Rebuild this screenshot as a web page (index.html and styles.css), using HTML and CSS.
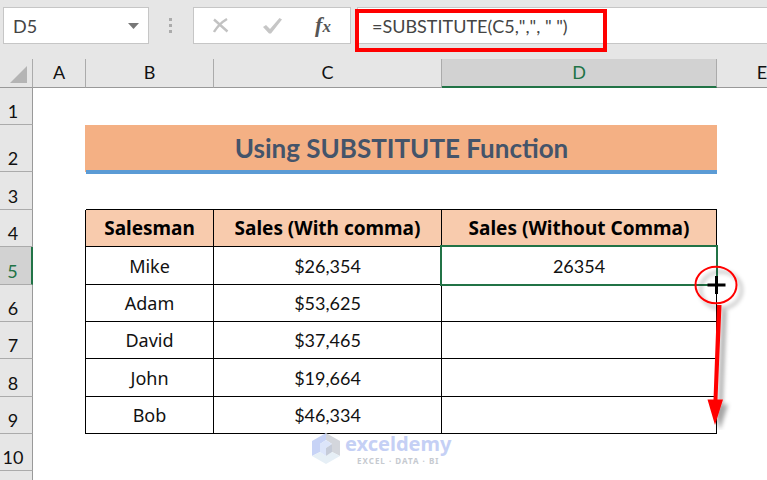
FILE: index.html
```html
<!DOCTYPE html>
<html lang="en">
<head>
<meta charset="utf-8">
<title>Using SUBSTITUTE Function</title>
<link rel="stylesheet" href="styles.css">
</head>
<body>
<header class="formula-bar">
  <div class="name-box">
    <input type="text" value="D5" aria-label="Name box">
    <button type="button" aria-label="Open name list"><svg width="12" height="6" viewBox="0 0 12 6"><path d="M0 0h11L5.500 6z" fill="#777"/></svg></button>
  </div>
  <svg class="grip" width="4" height="16" viewBox="0 0 4 16" fill="#ababab"><path d="M0 0h3v3H0zM0 6h3v3H0zM0 12h3v3H0z"/></svg>
  <div class="actions">
    <button type="button" aria-label="Cancel"><svg width="16" height="15" viewBox="0 0 16 15" fill="none" stroke="#c2c2c2" stroke-width="2.400"><path d="M1 1.500L14.500 13.500M14 1C9 4 4 9 1 14"/></svg></button>
    <button type="button" aria-label="Enter"><svg width="19" height="16" viewBox="0 0 19 16"><path d="M0 9l3-2 4 4L16.500 0 19 1.500 8 15.500H6z" fill="#c6c6c6"/></svg></button>
    <button type="button" class="fx" aria-label="Insert function">f<span>x</span></button>
  </div>
  <div class="formula">
    <input type="text" value='=SUBSTITUTE(C5,",", " ")' aria-label="Formula">
    <span class="formula-mark"></span>
  </div>
</header>
<main class="sheet">
  <table>
    <colgroup><col class="w-gutter"><col class="w-a"><col class="w-b"><col class="w-c"><col class="w-d"><col class="w-e"></colgroup>
    <thead>
      <tr class="letters"><th class="corner"><svg width="17" height="17" viewBox="0 0 17 17"><path d="M17 0v17H0z" fill="#b4b4b4"/></svg></th><th>A</th><th>B</th><th>C</th><th class="active">D</th><th>E</th></tr>
    </thead>
    <tbody>
      <tr><th>1</th><td></td><td></td><td></td><td></td><td></td></tr>
      <tr class="tall"><th>2</th><td></td><td class="title" colspan="3">Using SUBSTITUTE Function</td><td></td></tr>
      <tr class="above plus"><th>3</th><td></td><td></td><td></td><td></td><td></td></tr>
      <tr class="data head"><th>4</th><td></td><td>Salesman</td><td>Sales (With comma)</td><td>Sales (Without Comma)</td><td></td></tr>
      <tr class="data plus"><th class="active">5</th><td></td><td>Mike</td><td>$26,354</td>
        <td class="selected">26354
          <span class="selection"></span>
          <svg class="drag" width="60" height="170" viewBox="0 0 60 170">
            <defs><filter id="soft" x="-50%" y="-20%" width="200%" height="140%"><feDropShadow dx="5" dy="5" stdDeviation="2" flood-color="#000" flood-opacity=".35"/></filter></defs>
            <path d="M17 25h16M25 17v16" stroke="#fff" stroke-width="7"/>
            <g filter="url(#soft)">
              <ellipse cx="25" cy="25" rx="20.500" ry="18.300" fill="none" stroke="#f00" stroke-width="2"/>
              <path d="M26 45h4.500L26.500 139.500H32L24 165 16.500 139.500H22.500z" fill="#f00"/>
            </g>
            <path d="M16.500 25h18M25.500 16v18" stroke="#000" stroke-width="3"/>
          </svg>
        </td><td></td></tr>
      <tr class="data"><th>6</th><td></td><td>Adam</td><td>$53,625</td><td></td><td></td></tr>
      <tr class="data"><th>7</th><td></td><td>David</td><td>$37,465</td><td></td><td></td></tr>
      <tr class="data plus"><th>8</th><td></td><td>John</td><td>$19,664</td><td></td><td></td></tr>
      <tr class="data"><th>9</th><td></td><td>Bob</td><td>$46,334</td><td></td><td></td></tr>
      <tr><th>10</th><td></td><td></td><td></td><td></td><td></td></tr>
      <tr class="last"><th></th><td></td><td></td><td></td><td></td><td></td></tr>
    </tbody>
  </table>
  <div class="watermark">
    <svg width="28" height="31" viewBox="0 0 28 31">
      <path d="M14 0L0 8v15l8-4v-8l6-4z" fill="#c7d3f6"/>
      <path d="M14 0l14 8v15l-8-4v-8l-6-4z" fill="#d3d6dc"/>
      <path d="M0 23l8-4 6 4 6-4 8 4-14 8z" fill="#e6eff6"/>
      <path d="M14 7l6 4-6 4v8l-6-4v-8z" fill="#dce5fa"/>
      <path d="M14 15l6-4v8l-6 4z" fill="#c5cbd8"/>
    </svg>
    <div><strong>exceldemy</strong><small>EXCEL · DATA · BI</small></div>
  </div>
</main>
</body>
</html>
```
FILE: styles.css
```css
* { box-sizing: border-box; }

body {
  margin: 0;
  height: 100vh;
  overflow: hidden;
  background: #fff;
  color: #111;
  font-family: Lato, "Liberation Sans", sans-serif;
  font-size: 18px;
}

button, input {
  border: 0;
  padding: 0;
  background: none;
  font: inherit;
  color: inherit;
  min-width: 0;
}

button { display: flex; align-items: center; justify-content: center; }

.formula-bar {
  display: flex;
  align-items: center;
  height: 59px;
  padding: 7px 0 15px 3px;
  background: #e6e6e6;
  color: #444;
}

.name-box, .actions, .formula {
  display: flex;
  align-items: center;
  height: 37px;
  border: 1px solid #c6c6c6;
  background: #fff;
}

.name-box { width: 146px; padding: 0 8px 0 9px; }
.name-box input { flex: 1; }
.grip { margin: 0 20px; }
.actions { width: 158px; padding: 0 12px; justify-content: space-between; }
.actions button { width: 30px; height: 30px; }

.actions .fx {
  display: block;
  color: #555;
  font: italic bold 22px/26px "Liberation Serif", serif;
}
.fx span { font-size: 17px; }

.formula {
  position: relative;
  flex: 1;
  margin-left: 6px;
  border-right: 0;
  padding-left: 14px;
}
.formula input { flex: 1; font-kerning: none; }

.formula-mark {
  position: absolute;
  top: 1px;
  left: -3px;
  width: 252px;
  height: 43px;
  border: 4px solid #f00;
  pointer-events: none;
}

.sheet { overflow: hidden; }

table {
  width: 808px;
  table-layout: fixed;
  border-collapse: separate;
  border-spacing: 0;
}
.w-gutter { width: 33px; }
.w-a { width: 53px; }
.w-b { width: 128px; }
.w-c { width: 228px; }
.w-d { width: 275px; }
.w-e { width: 91px; }

tr { height: 37px; }
.plus { height: 38px; }
.tall { height: 47px; }
.letters { height: 29px; }
.last { height: 9px; }

th, td { padding: 0; text-align: center; line-height: 22px; }

th {
  background: #e6e6e6;
  border-right: 1px solid #ababab;
  border-bottom: 1px solid #ababab;
  font-weight: normal;
}
.letters th { padding-bottom: 2px; border-bottom-color: #999; }
tbody th { padding: 0 6px 2px 0; vertical-align: bottom; border-right-color: #999; }
.letters .corner { padding: 3px 5px 0 0; text-align: right; line-height: 0; }
.last th { padding: 0; border-bottom: 0; }
th.active { background: #d2d2d2; color: #217346; }
.letters th.active { border-bottom: 2px solid #217346; }
tbody th.active { border-right: 2px solid #217346; }

.title {
  background: #f4b084;
  border-bottom: 2px solid #5b9bd5;
  box-shadow: 0 2px #5b9bd5, -1px 0 #f4b084;
  color: #44546a;
  font-size: 26px;
  font-weight: bold;
  line-height: 30px;
}

.above td:nth-child(n+3):nth-child(-n+5) { border-bottom: 1px solid #000; }
.data td:nth-child(2) { border-right: 1px solid #000; }
.data td:nth-child(3) { font-family: "Noto Sans", sans-serif; }
.data td:nth-child(n+3):nth-child(-n+5) {
  border-right: 1px solid #000;
  border-bottom: 1px solid #000;
}
.head td:nth-child(n+3):nth-child(-n+5) {
  background: #f8cbad;
  color: #000;
  font-family: "Noto Sans", sans-serif;
  font-size: 19px;
  font-weight: bold;
}

.selected { position: relative; }
.selection {
  position: absolute;
  inset: -2px;
  border: 2px solid #217346;
}
.drag { position: absolute; left: 249px; top: 13px; z-index: 1; }

.watermark {
  position: absolute;
  top: 433px;
  left: 312px;
  display: flex;
  gap: 5px;
  color: #c5d0f5;
}
.watermark div { display: flex; flex-direction: column; align-items: center; }
.watermark strong { font: bold 20px/22px "Noto Sans", sans-serif; }
.watermark small { color: #c6cad0; font: bold 8px/11px "Noto Sans", sans-serif; letter-spacing: 1px; }
```
